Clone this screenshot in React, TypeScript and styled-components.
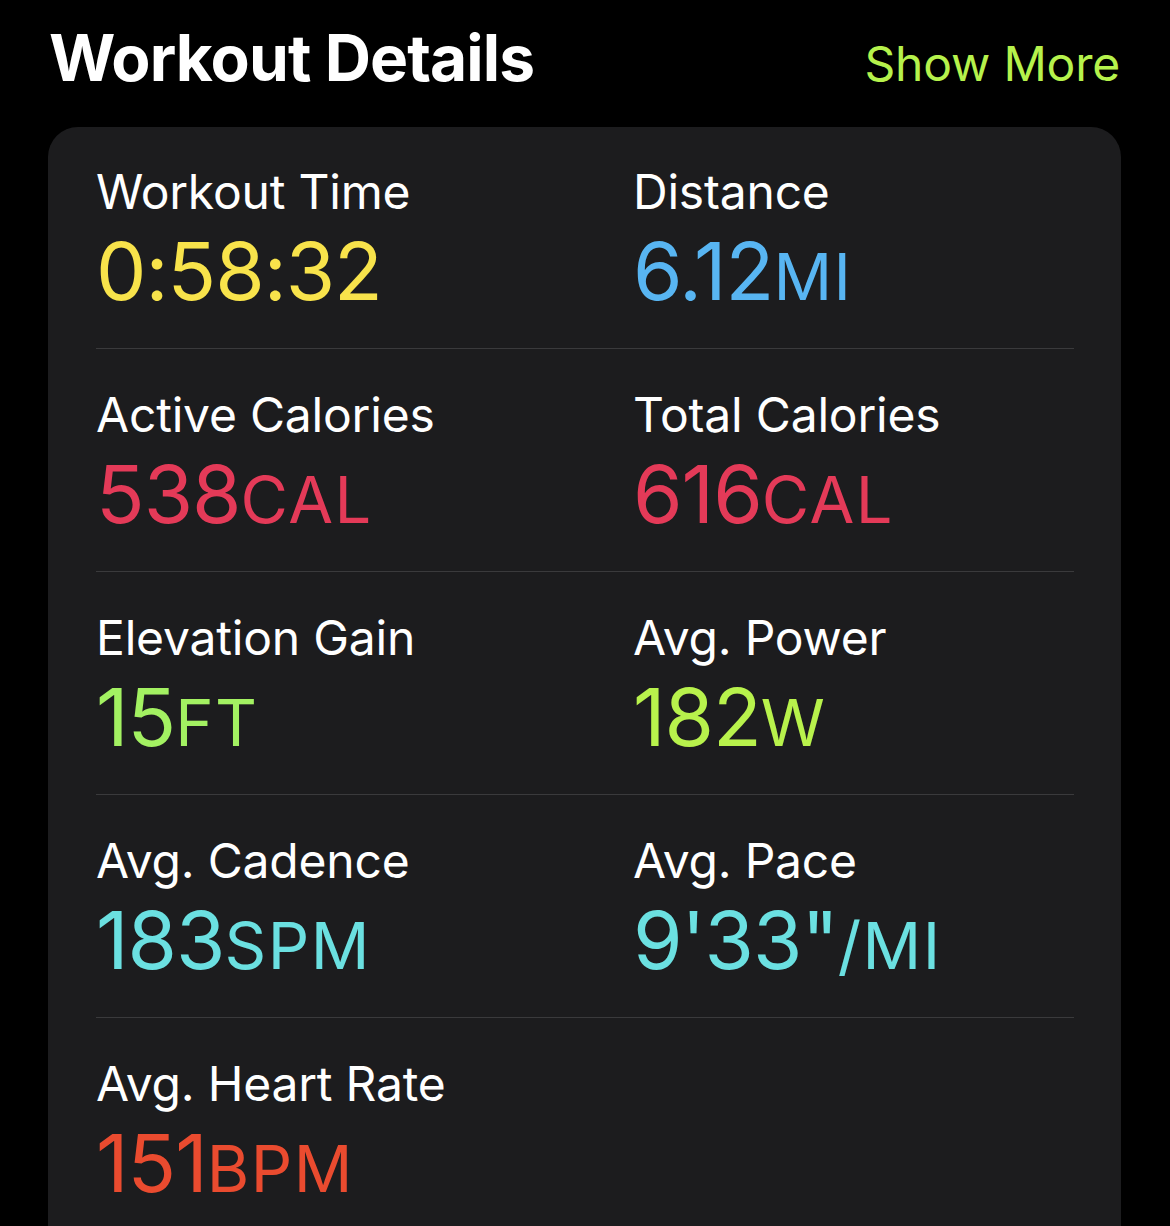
import React from 'react'
import styled, { createGlobalStyle } from 'styled-components'

type Metric = {
    label: string
    value: string
    unit: string
    color: string
}

const rows: Metric[][] = [
    [
        { label: 'Workout Time', value: '0:58:32', unit: '', color: '#f8e34b' },
        { label: 'Distance', value: '6.12', unit: 'MI', color: '#58b5f2' },
    ],
    [
        { label: 'Active Calories', value: '538', unit: 'CAL', color: '#e43a58' },
        { label: 'Total Calories', value: '616', unit: 'CAL', color: '#e43a58' },
    ],
    [
        { label: 'Elevation Gain', value: '15', unit: 'FT', color: '#a3f162' },
        { label: 'Avg. Power', value: '182', unit: 'W', color: '#b8f24c' },
    ],
    [
        { label: 'Avg. Cadence', value: '183', unit: 'SPM', color: '#6be0e1' },
        { label: 'Avg. Pace', value: '9\'33"', unit: '/MI', color: '#6be0e1' },
    ],
    [{ label: 'Avg. Heart Rate', value: '151', unit: 'BPM', color: '#ea4b2f' }],
]

export default function App() {
    return (
        <>
            <GlobalStyle />
            <Page>
                <Header>
                    <Title>Workout Details</Title>
                    <ShowMore>Show More</ShowMore>
                </Header>
                <Card>
                    {rows.map((row, i) => (
                        <Row key={i} last={i === rows.length - 1}>
                            {row.map((m) => (
                                <Cell key={m.label}>
                                    <Label>{m.label}</Label>
                                    <Value color={m.color}>
                                        {m.value}
                                        {m.unit && <Unit>{m.unit}</Unit>}
                                    </Value>
                                </Cell>
                            ))}
                        </Row>
                    ))}
                </Card>
            </Page>
        </>
    )
}

const GlobalStyle = createGlobalStyle`
    html, body {
        margin: 0;
        padding: 0;
        background: #000;
    }
    body {
        font-family: Inter, 'Noto Sans', sans-serif;
        color: #fff;
        overflow: hidden;
    }
`

const Page = styled.div`
    padding: 0 49px 0 48px;
    height: 1226px;
    box-sizing: border-box;
`

const Header = styled.div`
    display: flex;
    align-items: baseline;
    justify-content: space-between;
    padding: 20px 1px 0 1px;
    height: 127px;
    box-sizing: border-box;
`

const Title = styled.h1`
    margin: 0;
    font-size: 64px;
    font-weight: 700;
    line-height: 76px;
    letter-spacing: -0.9px;
`

const ShowMore = styled.a`
    font-size: 48px;
    color: #b6f24c;
    line-height: 76px;
    letter-spacing: -0.2px;
`

const Card = styled.div`
    background: #1c1c1e;
    border-radius: 30px;
    padding: 0 47px 0 48px;
    height: 1140px;
    box-sizing: border-box;
`

const Row = styled.div<{ last?: boolean }>`
    display: grid;
    grid-template-columns: 537px 1fr;
    padding: 35px 0 35px 0;
    border-bottom: ${(props) => (props.last ? 'none' : '1px solid #3a3a3c')};

    &:not(:first-child) {
        padding-top: 36px;
    }
`

const Cell = styled.div`
    display: flex;
    flex-direction: column;
    gap: 7px;
`

const Label = styled.div`
    font-size: 48px;
    line-height: 60px;
    height: 60px;
    color: #fff;
    letter-spacing: -0.2px;
`

const Value = styled.div<{ color: string }>`
    font-size: 80px;
    line-height: 84px;
    height: 84px;
    color: ${(props) => props.color};
    letter-spacing: -1px;
    white-space: nowrap;
`

const Unit = styled.span`
    font-size: 65px;
    line-height: 1;
    letter-spacing: 1.5px;
`
